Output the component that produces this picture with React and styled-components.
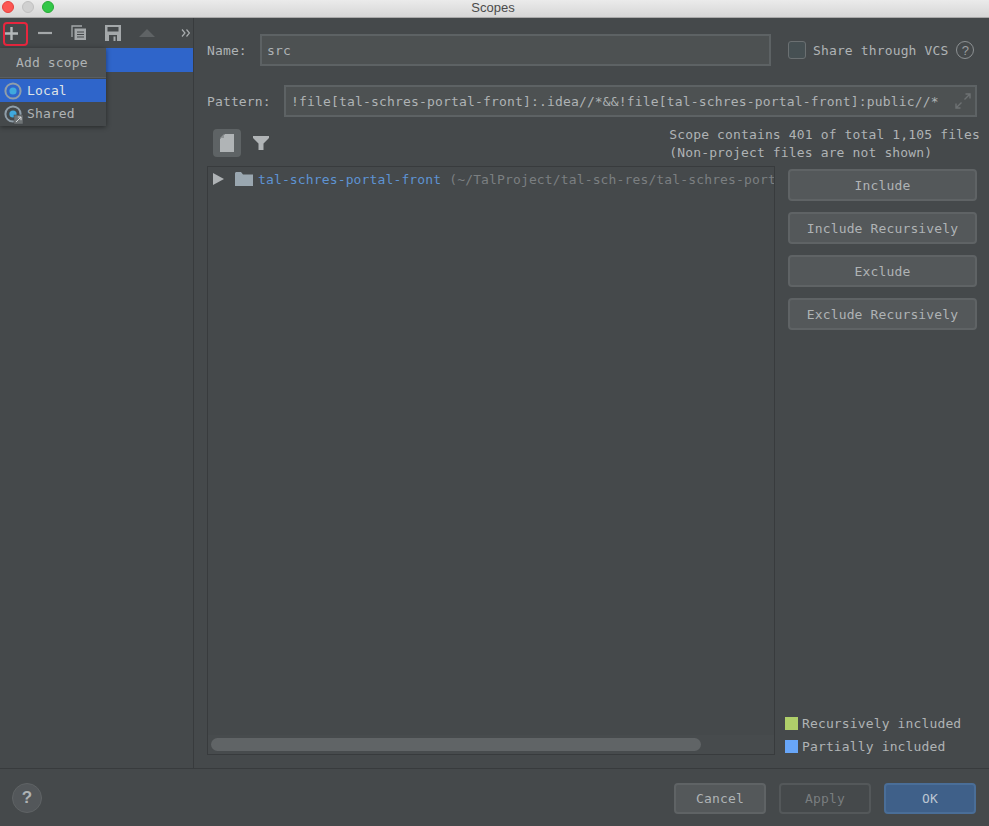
import React from 'react'
import styled, { createGlobalStyle } from 'styled-components'

const Global = createGlobalStyle`
  html, body { margin: 0; padding: 0; background: #45494b; }
  * { box-sizing: border-box; }
  svg { flex: none; }
`

const Window = styled.div`
  width: 989px;
  height: 826px;
  display: flex;
  flex-direction: column;
  overflow: hidden;
  background: #45494b;
  color: #afb3b5;
  font-family: "DejaVu Sans Mono", monospace;
  font-size: 13px;
  letter-spacing: 0.14px;
`
const TitleBar = styled.div`
  height: 18px;
  flex: none;
  display: grid;
  grid-template-columns: 1fr auto 1fr;
  align-items: start;
  background: linear-gradient(#ebebeb, #d6d6d6);
  border-bottom: 1px solid #a9a9a9;
`
const Lights = styled.div`
  display: flex;
  gap: 8px;
  padding: 1px 0 0 2px;
`
const Light = styled.span`
  width: 12px;
  height: 12px;
  border-radius: 50%;
  background: ${p => p.color};
  border: 1px solid ${p => p.edge};
`
const Title = styled.div`
  font-family: "Liberation Sans", sans-serif;
  font-size: 13px;
  letter-spacing: 0;
  line-height: 15px;
  padding-right: 3px;
  color: #4b4b4b;
`
const Body = styled.div`
  flex: 1;
  min-height: 0;
  display: flex;
`
const Sidebar = styled.aside`
  position: relative;
  width: 194px;
  flex: none;
  border-right: 1px solid #383b3d;
`
const Toolbar = styled.div`
  height: 30px;
  display: flex;
  align-items: center;
  gap: 12px;
`
const ToolIcon = styled.span`
  width: 22px;
  height: 20px;
  display: flex;
  align-items: center;
  justify-content: center;
`
const More = styled.span`
  margin-left: auto;
  margin-right: 3px;
  display: flex;
`
const Highlight = styled.div`
  position: absolute;
  left: 3px;
  top: 4px;
  width: 25px;
  height: 24px;
  border: 2px solid #e8263e;
  border-radius: 4px;
`
const SelectedRow = styled.div`
  height: 24px;
  background: #2f65ca;
`
const Popup = styled.div`
  position: absolute;
  left: 0;
  top: 30px;
  width: 106px;
  height: 78px;
  background: #45494b;
  box-shadow: 0 1px 5px rgba(0, 0, 0, 0.45);
`
const PopupHead = styled.div`
  height: 30px;
  padding-left: 16px;
  line-height: 29px;
  background: #4e5254;
  border-bottom: 1px solid #5a5e60;
  margin-bottom: 1px;
`
const PopupItem = styled.div`
  height: 23px;
  display: flex;
  align-items: center;
  gap: 5px;
  padding-left: 4px;
  background: ${p => (p.active ? '#2f65ca' : 'transparent')};
  color: ${p => (p.active ? '#dfe3e6' : '#afb3b5')};
`
const Main = styled.main`
  flex: 1;
  min-width: 0;
  display: flex;
  flex-direction: column;
  padding: 16px 12px 13px 13px;
`
const NameRow = styled.div`
  height: 32px;
  display: flex;
  align-items: center;
`
const PatternRow = styled(NameRow)`
  margin-top: 19px;
`
const FieldLabel = styled.label`
  width: ${p => p.width}px;
  flex: none;
`
const Field = styled.div`
  width: ${p => p.width}px;
  height: 32px;
  flex: ${p => (p.width ? 'none' : 1)};
  display: flex;
  align-items: center;
  justify-content: space-between;
  padding: 0 4px 0 5px;
  background: #4d5152;
  border: 2px solid #5d6264;
  letter-spacing: ${p => (p.width ? '0.14px' : '0.17px')};
`
const Share = styled.div`
  display: flex;
  align-items: center;
  margin-left: 17px;
`
const Checkbox = styled.span`
  width: 18px;
  height: 18px;
  margin-right: 7px;
  border: 1px solid #6b7072;
  border-radius: 3px;
  background: #465053;
`
const Hint = styled.span`
  width: 18px;
  height: 18px;
  margin-left: 8px;
  border: 1.5px solid #8d9193;
  border-radius: 50%;
  display: flex;
  align-items: center;
  justify-content: center;
  font-family: "Liberation Sans", sans-serif;
  font-size: 13px;
  color: #9a9ea0;
`
const FilterBar = styled.div`
  height: 49px;
  display: flex;
  align-items: flex-start;
  justify-content: space-between;
  padding: 12px 0 0 6px;
`
const FilterTools = styled.div`
  display: flex;
  align-items: center;
  gap: 12px;
`
const ToggleButton = styled.span`
  width: 28px;
  height: 28px;
  border-radius: 4px;
  background: #5e6365;
  display: flex;
  align-items: center;
  justify-content: center;
`
const ScopeInfo = styled.div`
  line-height: 18px;
  margin-top: -3px;
  margin-right: -3px;
  white-space: pre;
`
const Content = styled.div`
  flex: 1;
  min-height: 0;
  display: flex;
`
const Tree = styled.div`
  width: 568px;
  flex: none;
  display: flex;
  flex-direction: column;
  border: 1px solid #383b3d;
`
const TreeBody = styled.div`
  flex: 1;
  min-height: 0;
  overflow: hidden;
  padding: 2px 0 0 5px;
`
const TreeRow = styled.div`
  height: 20px;
  display: flex;
  align-items: center;
  gap: 11px;
  white-space: nowrap;
`
const NodeLabel = styled.span`
  margin-left: -6px;
`
const NodeName = styled.span`
  color: #5e93d3;
`
const NodePath = styled.span`
  color: #7b7f81;
  margin-left: 8px;
`
const ScrollTrack = styled.div`
  height: 19px;
  flex: none;
  padding: 3px 3px 0;
  background: #474b4d;
`
const ScrollThumb = styled.div`
  width: 490px;
  height: 13px;
  border-radius: 6.5px;
  background: #606466;
`
const SideColumn = styled.div`
  flex: 1;
  display: flex;
  flex-direction: column;
  justify-content: space-between;
  padding: 3px 0 0 13px;
`
const SideButtons = styled.div`
  display: flex;
  flex-direction: column;
  gap: 11px;
`
const Button = styled.button`
  width: ${p => p.width || 'auto'};
  height: 32px;
  padding: 0;
  border-radius: 4px;
  border: 2px solid ${p => (p.variant === 'primary' ? '#4a6e98' : p.variant === 'ghost' ? '#54585a' : '#5f6365')};
  background: ${p => (p.variant === 'primary' ? '#3f6089' : p.variant === 'ghost' ? '#45494b' : '#54585a')};
  color: ${p => (p.variant === 'primary' ? '#bcc6d2' : p.variant === 'ghost' ? '#797d7f' : '#afb3b5')};
  font: inherit;
  letter-spacing: inherit;
`
const FooterButton = styled(Button)`
  height: 31px;
`
const Legend = styled.div`
  display: flex;
  flex-direction: column;
  gap: 10px;
  margin-left: -3px;
  margin-bottom: 2px;
`
const LegendItem = styled.div`
  height: 13px;
  display: flex;
  align-items: center;
  gap: 4px;
`
const Swatch = styled.span`
  width: 13px;
  height: 13px;
  background: ${p => p.color};
`
const Footer = styled.footer`
  height: 58px;
  flex: none;
  display: flex;
  align-items: flex-start;
  justify-content: space-between;
  padding: 14px 13px 0 12px;
  border-top: 1px solid #383b3d;
`
const HelpButton = styled.span`
  width: 30px;
  height: 30px;
  border-radius: 50%;
  background: #53575a;
  border: 1px solid #5f6365;
  display: flex;
  align-items: center;
  justify-content: center;
  font-family: "Liberation Sans", sans-serif;
  font-size: 17px;
  font-weight: 700;
  color: #afb3b5;
`
const FooterButtons = styled.div`
  display: flex;
  gap: 13px;
`

const ScopeIcon = ({ shared }) => (
  <svg width="18" height="18" viewBox="0 0 18 18" overflow="visible">
    <circle cx="9" cy="9" r="7.6" fill="none" stroke="#8f9ea9" strokeWidth="2" />
    <circle cx="9" cy="9" r="3.6" fill="#40a9dd" />
    {shared && <rect x="10" y="10" width="9" height="9" fill="#6e7375" stroke="#45494b" strokeWidth="0.5" />}
    {shared && <path d="M12 17l5-5M13.8 12H17v3.2" fill="none" stroke="#d4d7d9" strokeWidth="1" />}
  </svg>
)

const App = () => (
  <Window>
    <Global />
    <TitleBar>
      <Lights>
        <Light color="#fc5753" edge="#e5403d" />
        <Light color="#d0d0d0" edge="#c0c0c0" />
        <Light color="#33c748" edge="#27aa35" />
      </Lights>
      <Title>Scopes</Title>
    </TitleBar>
    <Body>
      <Sidebar>
        <Toolbar>
          <ToolIcon>
            <svg width="13" height="13" viewBox="0 0 13 13"><path d="M6.5 0v13M0 6.5h13" stroke="#b4b8ba" strokeWidth="2.4" /></svg>
          </ToolIcon>
          <ToolIcon>
            <svg width="14" height="14" viewBox="0 0 14 14"><path d="M0 7h14" stroke="#a4a8aa" strokeWidth="2.2" /></svg>
          </ToolIcon>
          <ToolIcon>
            <svg width="16" height="16" viewBox="0 0 16 16">
              <path d="M1 12V1h10" fill="none" stroke="#a4a8aa" strokeWidth="1.3" />
              <path d="M3.5 3.5H15V15H3.5z" fill="#a4a8aa" />
              <path d="M6 7h7M6 9.5h7M6 12h7" stroke="#45494b" strokeWidth="1.1" />
            </svg>
          </ToolIcon>
          <ToolIcon>
            <svg width="16" height="16" viewBox="0 0 16 16">
              <path d="M0 0h16v16H0z" fill="#a4a8aa" />
              <path d="M2.5 2h11v4.5h-11zM4 10h8v6H4z" fill="#45494b" />
              <path d="M8.5 11.5h2V16h-2z" fill="#a4a8aa" />
            </svg>
          </ToolIcon>
          <ToolIcon>
            <svg width="16" height="8" viewBox="0 0 16 8"><path d="M8 0l8 8H0z" fill="#5f6365" /></svg>
          </ToolIcon>
          <More>
            <svg width="9" height="8" viewBox="0 0 9 8"><path d="M1 .5L4 4 1 7.5M5.5 .5L8.5 4l-3 3.5" fill="none" stroke="#a9adaf" strokeWidth="1.2" /></svg>
          </More>
        </Toolbar>
        <Highlight />
        <SelectedRow />
        <Popup>
          <PopupHead>Add scope</PopupHead>
          <PopupItem active><ScopeIcon />Local</PopupItem>
          <PopupItem><ScopeIcon shared />Shared</PopupItem>
        </Popup>
      </Sidebar>
      <Main>
        <NameRow>
          <FieldLabel width={53}>Name:</FieldLabel>
          <Field width={511}>src</Field>
          <Share>
            <Checkbox />
            Share through VCS
            <Hint>?</Hint>
          </Share>
        </NameRow>
        <PatternRow>
          <FieldLabel width={77}>Pattern:</FieldLabel>
          <Field>
            !file[tal-schres-portal-front]:.idea//*&amp;&amp;!file[tal-schres-portal-front]:public//*
            <svg width="16" height="16" viewBox="0 0 16 16">
              <path d="M9.5 6.5L15 1M10.5 1H15v4.5M6.5 9.5L1 15M5.5 15H1v-4.5" fill="none" stroke="#6d7173" strokeWidth="1.4" />
            </svg>
          </Field>
        </PatternRow>
        <FilterBar>
          <FilterTools>
            <ToggleButton>
              <svg width="14" height="18" viewBox="0 0 14 18"><path d="M5 0h9v18H0V5z" fill="#b0b4b6" /><path d="M4 0v4H0z" fill="#8d9193" /></svg>
            </ToggleButton>
            <svg width="16" height="16" viewBox="0 0 16 16"><path d="M0 1h16v2l-5.5 5.5V15h-5V8.5L0 3z" fill="#b0b4b6" /></svg>
          </FilterTools>
          <ScopeInfo>{'Scope contains 401 of total 1,105 files\n(Non-project files are not shown)'}</ScopeInfo>
        </FilterBar>
        <Content>
          <Tree>
            <TreeBody>
              <TreeRow>
                <svg width="11" height="12" viewBox="0 0 11 12"><path d="M0 0l11 6-11 6z" fill="#afb3b5" /></svg>
                <svg width="18" height="14" viewBox="0 0 18 14">
                  <path d="M0 1.5C0 .7.7 0 1.5 0H6l2 2.5h10V14H0z" fill="#9aa7b0" />
                </svg>
                <NodeLabel>
                  <NodeName>tal-schres-portal-front</NodeName>
                  <NodePath>(~/TalProject/tal-sch-res/tal-schres-port</NodePath>
                </NodeLabel>
              </TreeRow>
            </TreeBody>
            <ScrollTrack><ScrollThumb /></ScrollTrack>
          </Tree>
          <SideColumn>
            <SideButtons>
              <Button>Include</Button>
              <Button>Include Recursively</Button>
              <Button>Exclude</Button>
              <Button>Exclude Recursively</Button>
            </SideButtons>
            <Legend>
              <LegendItem><Swatch color="#afcf6a" />Recursively included</LegendItem>
              <LegendItem><Swatch color="#68a6f8" />Partially included</LegendItem>
            </Legend>
          </SideColumn>
        </Content>
      </Main>
    </Body>
    <Footer>
      <HelpButton>?</HelpButton>
      <FooterButtons>
        <FooterButton width="92px">Cancel</FooterButton>
        <FooterButton width="92px" variant="ghost">Apply</FooterButton>
        <FooterButton width="92px" variant="primary">OK</FooterButton>
      </FooterButtons>
    </Footer>
  </Window>
)

export default App
